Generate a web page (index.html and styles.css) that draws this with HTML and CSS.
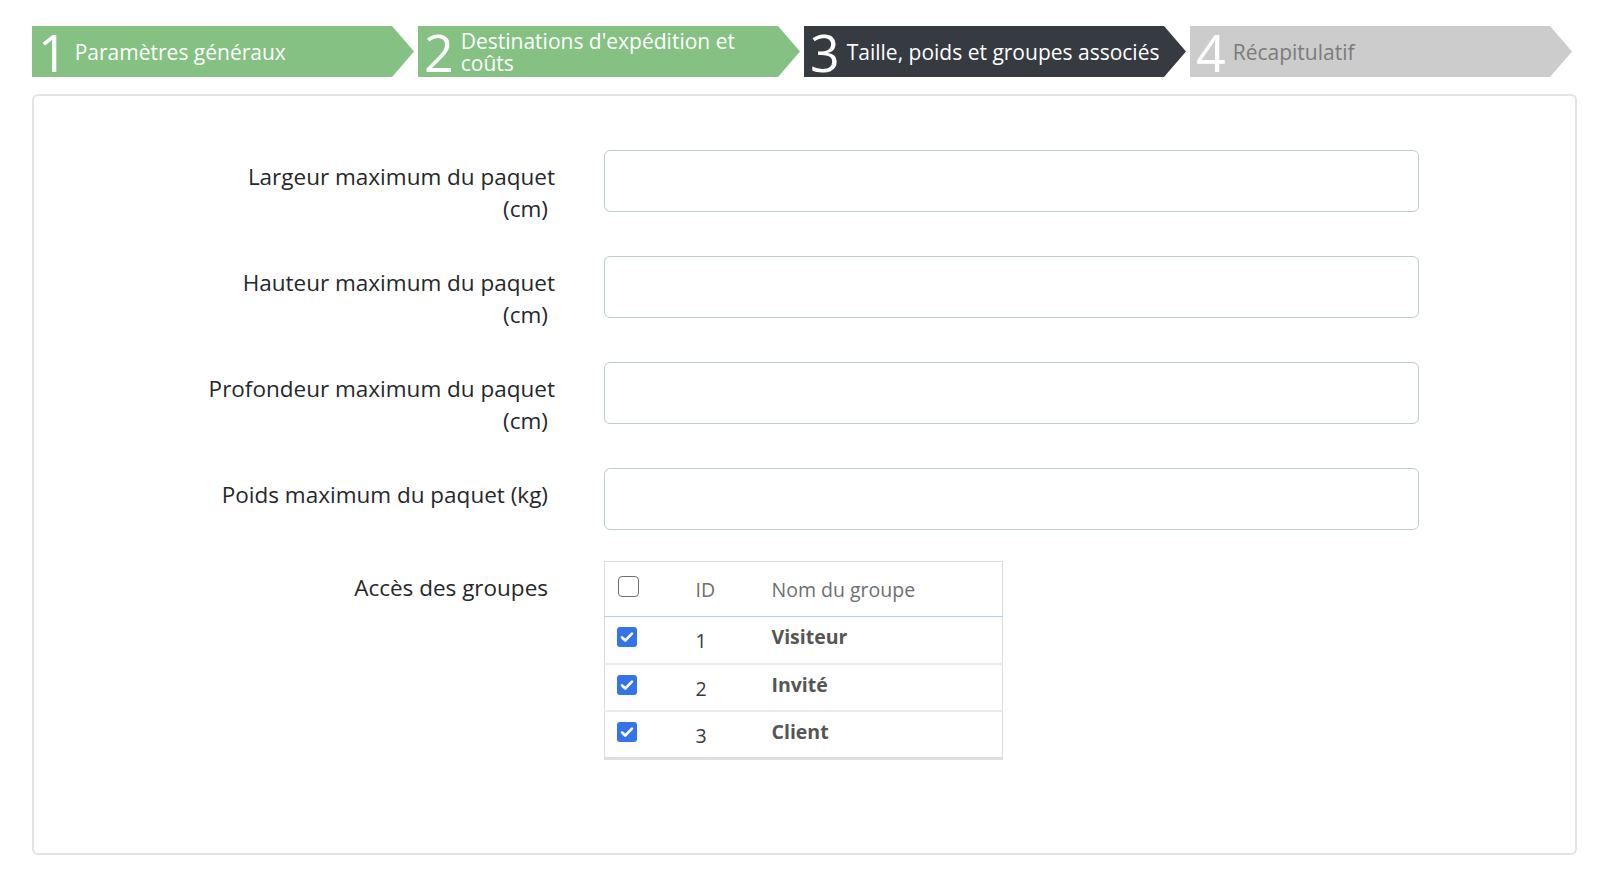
FILE: index.html
```html
<!DOCTYPE html>
<html lang="fr">
<head>
<meta charset="utf-8">
<title>Transporteur - Taille, poids et groupes associés</title>
<link rel="stylesheet" href="styles.css">
</head>
<body>
<div class="page">
  <ol class="steps">
    <li class="step step-done"><span class="step-num">1</span><span class="step-txt">Paramètres généraux</span></li>
    <li class="step step-done"><span class="step-num">2</span><span class="step-txt step-txt-two">Destinations d'expédition et coûts</span></li>
    <li class="step step-current"><span class="step-num">3</span><span class="step-txt">Taille, poids et groupes associés</span></li>
    <li class="step step-todo"><span class="step-num">4</span><span class="step-txt">Récapitulatif</span></li>
  </ol>

  <div class="card">
    <form class="form">
      <div class="row">
        <label class="lbl">Largeur maximum du paquet <span class="lbl-end">(cm)</span></label>
        <div class="field"><input class="inp" type="text"></div>
      </div>
      <div class="row">
        <label class="lbl">Hauteur maximum du paquet <span class="lbl-end">(cm)</span></label>
        <div class="field"><input class="inp" type="text"></div>
      </div>
      <div class="row">
        <label class="lbl">Profondeur maximum du paquet <span class="lbl-end">(cm)</span></label>
        <div class="field"><input class="inp" type="text"></div>
      </div>
      <div class="row">
        <label class="lbl">Poids maximum du paquet <span class="lbl-end">(kg)</span></label>
        <div class="field"><input class="inp" type="text"></div>
      </div>
      <div class="row">
        <label class="lbl">Accès des <span class="lbl-end">groupes</span></label>
        <div class="field">
          <table class="grp">
            <colgroup><col class="c-chk"><col class="c-id"><col class="c-name"></colgroup>
            <thead>
              <tr>
                <th class="th-chk"><span class="cb"></span></th>
                <th>ID</th>
                <th>Nom du groupe</th>
              </tr>
            </thead>
            <tbody>
              <tr>
                <td class="td-chk"><span class="cb cb-on"><svg viewBox="0 0 20 20" width="20" height="20"><path d="M5 10.3l3.2 3.2L15 6.6" fill="none" stroke="#fff" stroke-width="2.6" stroke-linecap="round" stroke-linejoin="round"/></svg></span></td>
                <td class="td-id">1</td>
                <td class="td-name">Visiteur</td>
              </tr>
              <tr>
                <td class="td-chk"><span class="cb cb-on"><svg viewBox="0 0 20 20" width="20" height="20"><path d="M5 10.3l3.2 3.2L15 6.6" fill="none" stroke="#fff" stroke-width="2.6" stroke-linecap="round" stroke-linejoin="round"/></svg></span></td>
                <td class="td-id">2</td>
                <td class="td-name">Invité</td>
              </tr>
              <tr>
                <td class="td-chk"><span class="cb cb-on"><svg viewBox="0 0 20 20" width="20" height="20"><path d="M5 10.3l3.2 3.2L15 6.6" fill="none" stroke="#fff" stroke-width="2.6" stroke-linecap="round" stroke-linejoin="round"/></svg></span></td>
                <td class="td-id">3</td>
                <td class="td-name">Client</td>
              </tr>
            </tbody>
          </table>
        </div>
      </div>
    </form>
  </div>
</div>
</body>
</html>
```
FILE: styles.css
```css
* { box-sizing: border-box; }

html, body {
  margin: 0;
  padding: 0;
  background: #ffffff;
  font-family: "Open Sans", "Noto Sans", "DejaVu Sans", sans-serif;
  color: #25282b;
}

.page {
  padding: 26px 23px 0 32px;
}

/* ---------- steps ---------- */
.steps {
  list-style: none;
  margin: 0;
  padding: 0;
  display: flex;
  gap: 4px;
}

.step {
  flex: 0 0 382px;
  height: 51px;
  display: flex;
  align-items: center;
  padding-left: 6px;
  padding-right: 12px;
  clip-path: polygon(0 0, calc(100% - 22px) 0, 100% 50%, calc(100% - 22px) 100%, 0 100%);
  color: #ffffff;
}

.step-done { background: #84c182; }
.step-current { background: #363a41; }
.step-todo { background: #cccccc; color: #7b7b7b; }

.step-num {
  flex: 0 0 auto;
  font-size: 52px;
  font-weight: 400;
  line-height: 1;
  color: #ffffff;
  margin-right: 7px;
}

.step-txt {
  font-size: 21px;
  line-height: 22px;
}

/* ---------- card ---------- */
.card {
  margin-top: 17px;
  border: 2px solid #e3e3e3;
  border-radius: 6px;
  height: 761px;
  padding-top: 54px;
}

.form {
  display: flex;
  flex-direction: column;
  gap: 31px;
}

.row {
  display: flex;
  align-items: flex-start;
}

.lbl {
  flex: 0 0 352px;
  margin-left: 169px;
  padding-top: 11px;
  text-align: right;
  font-size: 22.5px;
  line-height: 32px;
  color: #25282b;
}

.lbl-end {
  white-space: nowrap;
  padding-right: 7px;
}

.field {
  margin-left: 49px;
  width: 815px;
}

.inp {
  display: block;
  width: 100%;
  height: 62px;
  border: 1px solid #bbcdd2;
  border-radius: 6px;
  background: #ffffff;
  font: inherit;
  padding: 0 12px;
}

/* ---------- groups table ---------- */
.grp {
  width: 398px;
  table-layout: fixed;
  border-collapse: collapse;
  border: 1px solid #dcdcdc;
  border-bottom: 3px solid #dedede;
}

.c-chk { width: 91px; }
.c-id { width: 76px; }
.c-name { width: 231px; }

.grp th {
  height: 55px;
  padding: 0;
  text-align: left;
  vertical-align: middle;
  font-weight: 400;
  font-size: 19.5px;
  color: #6c6f72;
  border-bottom: 1px solid #a9d4ee;
}

.grp th.th-chk {
  vertical-align: top;
  padding-left: 13px;
  padding-top: 14px;
}

.grp td {
  height: 47px;
  padding: 0;
  vertical-align: top;
  border-top: 2px solid #e9ebed;
}

.grp tbody tr:first-child td { border-top: none; }
.grp tbody tr:last-child td { height: 48px; }

.grp td.td-chk { padding-left: 12px; padding-top: 10px; }

.grp td.td-id {
  padding-top: 11px;
  font-size: 19.5px;
  line-height: 26px;
  color: #363a41;
}

.grp td.td-name {
  padding-top: 7px;
  font-size: 19.5px;
  line-height: 26px;
  font-weight: 700;
  color: #555555;
}

.cb {
  display: block;
  width: 21px;
  height: 21px;
  border: 1.5px solid #717171;
  border-radius: 4px;
  background: #ffffff;
}

.cb-on {
  width: 20px;
  height: 20px;
  border: none;
  border-radius: 3px;
  background: #3574e8;
}

.cb-on svg { display: block; }
```
